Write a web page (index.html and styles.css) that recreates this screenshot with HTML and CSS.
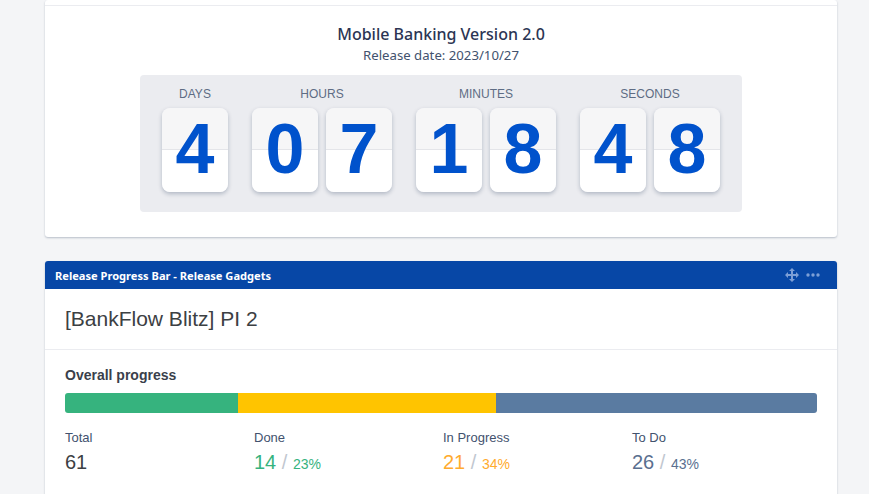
FILE: index.html
```html
<!DOCTYPE html>
<html lang="en">
<head>
<meta charset="utf-8">
<title>Release Gadgets</title>
<link rel="stylesheet" href="styles.css">
</head>
<body>
<main class="page">
  <section class="card countdown-card">
    <div class="card-cut"></div>
    <div class="release">
      <h2 class="release-title">Mobile Banking Version 2.0</h2>
      <p class="release-date">Release date: 2023/10/27</p>
      <div class="clock">
        <div class="unit">
          <div class="unit-label">DAYS</div>
          <div class="digits"><div class="digit"><span class="digit-top"></span><span class="digit-bottom"></span><span class="digit-value">4</span></div></div>
        </div>
        <div class="unit">
          <div class="unit-label">HOURS</div>
          <div class="digits">
            <div class="digit"><span class="digit-top"></span><span class="digit-bottom"></span><span class="digit-value">0</span></div>
            <div class="digit"><span class="digit-top"></span><span class="digit-bottom"></span><span class="digit-value">7</span></div>
          </div>
        </div>
        <div class="unit">
          <div class="unit-label">MINUTES</div>
          <div class="digits">
            <div class="digit"><span class="digit-top"></span><span class="digit-bottom"></span><span class="digit-value">1</span></div>
            <div class="digit"><span class="digit-top"></span><span class="digit-bottom"></span><span class="digit-value">8</span></div>
          </div>
        </div>
        <div class="unit">
          <div class="unit-label">SECONDS</div>
          <div class="digits">
            <div class="digit"><span class="digit-top"></span><span class="digit-bottom"></span><span class="digit-value">4</span></div>
            <div class="digit"><span class="digit-top"></span><span class="digit-bottom"></span><span class="digit-value">8</span></div>
          </div>
        </div>
      </div>
    </div>
  </section>

  <section class="card progress-card">
    <header class="gadget-header">
      <span class="gadget-title">Release Progress Bar - Release Gadgets</span>
      <span class="gadget-actions">
        <svg class="icon-move" width="14" height="14" viewBox="0 0 14 14" aria-hidden="true">
          <path d="M7 0 10 3H8V6H11V4L14 7 11 10V8H8V11H10L7 14 4 11H6V8H3V10L0 7 3 4V6H6V3H4Z"/>
        </svg>
        <svg class="icon-more" width="14" height="4" viewBox="0 0 14 4" aria-hidden="true">
          <circle cx="2" cy="2" r="1.7"/><circle cx="7" cy="2" r="1.7"/><circle cx="12" cy="2" r="1.7"/>
        </svg>
      </span>
    </header>
    <h3 class="version-name">[BankFlow Blitz] PI 2</h3>
    <div class="overall">
      <div class="overall-title">Overall progress</div>
      <div class="bar">
        <div class="seg seg-done"></div>
        <div class="seg seg-progress"></div>
        <div class="seg seg-todo"></div>
      </div>
      <div class="stats">
        <div class="stat">
          <div class="stat-label">Total</div>
          <div class="stat-value total">61</div>
        </div>
        <div class="stat">
          <div class="stat-label">Done</div>
          <div class="stat-value done">14 <span class="slash">/</span> <span class="pct">23%</span></div>
        </div>
        <div class="stat">
          <div class="stat-label">In Progress</div>
          <div class="stat-value inprog">21 <span class="slash">/</span> <span class="pct">34%</span></div>
        </div>
        <div class="stat">
          <div class="stat-label">To Do</div>
          <div class="stat-value todo">26 <span class="slash">/</span> <span class="pct">43%</span></div>
        </div>
      </div>
    </div>
  </section>
</main>
</body>
</html>
```

FILE: styles.css
```css
* { box-sizing: border-box; }

html, body { margin: 0; height: 100%; overflow: hidden; }

body {
  background: #f4f5f7;
  font-family: "Liberation Sans", Arial, sans-serif;
  color: #42526e;
}

.page {
  display: flex;
  flex-direction: column;
  gap: 24px;
  width: 792px;
  margin-left: 45px;
}

.card {
  background: #fff;
  border-radius: 3px;
  box-shadow: 0 1px 2px rgba(9, 30, 66, 0.25);
}

.card-cut {
  height: 6px;
  border-bottom: 1px solid #ebecf0;
}

.release {
  display: flex;
  flex-direction: column;
  align-items: center;
  padding: 17px 0 25px;
}

.release-title {
  margin: 0;
  font: 500 16px/22px "Noto Sans", sans-serif;
  color: #2b3553;
}

.release-date {
  margin: 2px 0 0;
  font: 400 13.2px/17px "Noto Sans", sans-serif;
  color: #42526e;
}

.clock {
  display: flex;
  gap: 24px;
  margin-top: 11px;
  padding: 11px 22px 20px;
  background: #ebecf0;
  border-radius: 4px;
}

.unit-label {
  height: 22px;
  font-size: 12px;
  line-height: 16px;
  text-align: center;
  color: #5e6c84;
}

.digits { display: flex; gap: 8px; }

.digit {
  position: relative;
  display: flex;
  flex-direction: column;
  width: 66px;
  height: 84px;
  border-radius: 8px;
  overflow: hidden;
  box-shadow: 0 2px 4px rgba(9, 30, 66, 0.25);
}

.digit-top {
  height: 42px;
  background: #f6f6f7;
  border-bottom: 1px solid #e4e5e9;
}

.digit-bottom { flex: 1; background: #fff; }

.digit-value {
  position: absolute;
  inset: 0;
  font-size: 70px;
  font-weight: 700;
  line-height: 82px;
  text-align: center;
  color: #0052cc;
}

.gadget-header {
  display: flex;
  align-items: center;
  justify-content: space-between;
  height: 28px;
  padding: 0 17px 0 10px;
  background: #0747a6;
  border-radius: 3px 3px 0 0;
}

.gadget-title {
  padding-top: 2px;
  font: 700 11.1px/16px "Noto Sans", sans-serif;
  color: #fff;
}

.gadget-actions { display: flex; align-items: center; gap: 7px; }

.icon-move, .icon-more { fill: #7d9fd6; }

.version-name {
  margin: 0;
  padding: 16px 20px 17px;
  font-size: 21px;
  font-weight: 400;
  line-height: 27px;
  color: #3c4043;
  border-bottom: 1px solid #ebecf0;
}

.overall { padding: 16px 20px 22px; }

.overall-title {
  font: 700 14px/18px "Liberation Sans", sans-serif;
  color: #3a3f4b;
}

.bar {
  display: flex;
  height: 20px;
  margin-top: 9px;
  border-radius: 3px;
  overflow: hidden;
}

.seg-done { width: 23%; background: #36b37e; }
.seg-progress { width: 34.3%; background: #ffc400; }
.seg-todo { flex: 1; background: #5a7ba1; }

.stats {
  display: grid;
  grid-template-columns: repeat(4, 189px);
  margin-top: 17px;
}

.stat-label {
  font: 400 13px/16px "Liberation Sans", sans-serif;
  color: #42526e;
}

.stat-value {
  margin-top: 4px;
  font: 400 20px/24px "Liberation Sans", sans-serif;
}

.slash { color: #c1c7d0; }
.pct { font-size: 14px; }

.total { color: #3c4043; }
.done { color: #36b37e; }
.inprog { color: #ffab2e; }
.todo { color: #5a6f8f; }
```
